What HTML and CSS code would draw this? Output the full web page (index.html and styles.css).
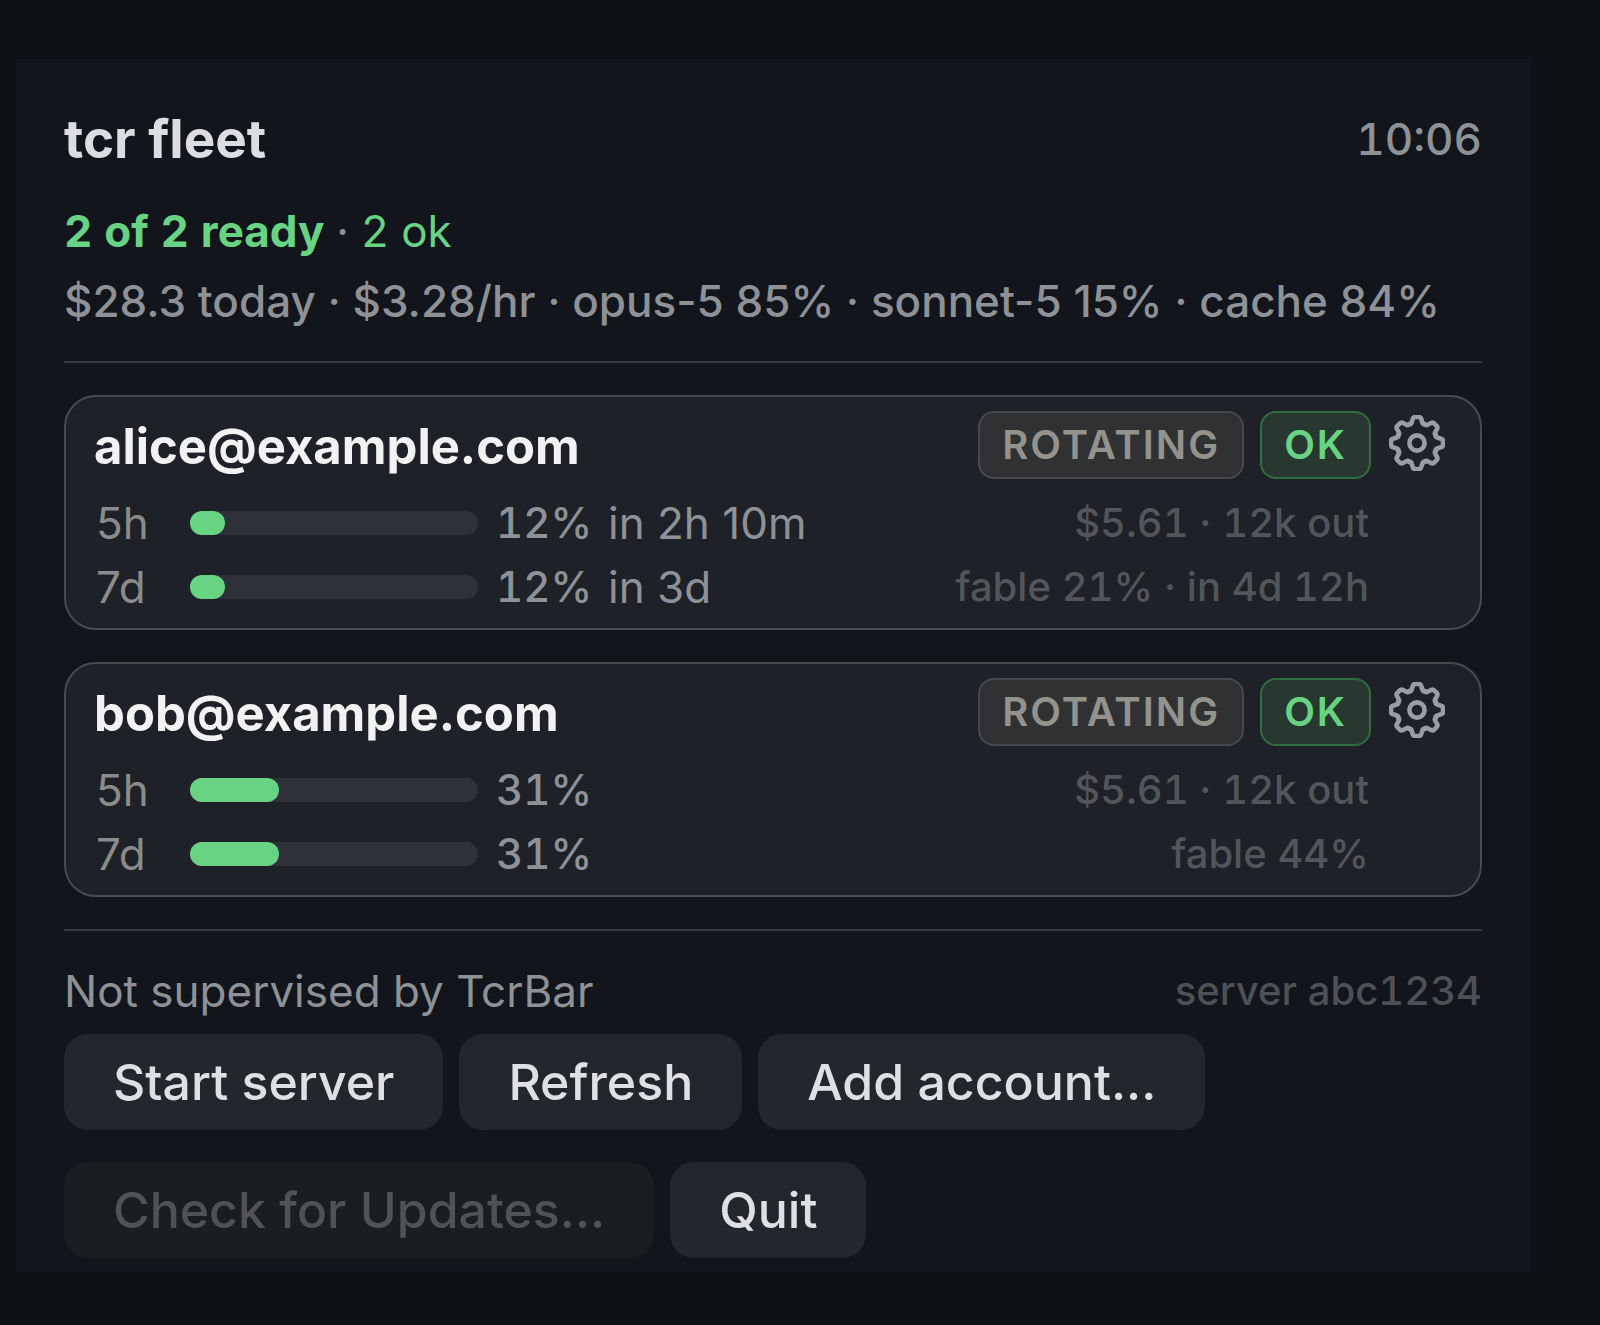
FILE: index.html
```html
<!DOCTYPE html>
<html lang="en">
<head>
<meta charset="utf-8">
<meta name="viewport" content="width=device-width, initial-scale=1">
<title>tcr fleet</title>
<link rel="stylesheet" href="styles.css">
</head>
<body>
<svg class="sprite" aria-hidden="true">
  <defs>
    <path id="tooth" d="M-7.8 -18.9C-6.4 -18.3 -5.6 -19.2 -5.2 -20.8L-4.3 -24C-3.9 -25.4 -3 -26 -1.8 -26H1.8C3 -26 3.9 -25.4 4.3 -24L5.2 -20.8C5.6 -19.2 6.4 -18.3 7.8 -18.9"/>
    <symbol id="gear" viewBox="-28 -28 56 56">
      <g fill="none" stroke="currentColor" stroke-width="4.6" stroke-linecap="round">
        <use href="#tooth"/>
        <use href="#tooth" transform="rotate(45)"/>
        <use href="#tooth" transform="rotate(90)"/>
        <use href="#tooth" transform="rotate(135)"/>
        <use href="#tooth" transform="rotate(180)"/>
        <use href="#tooth" transform="rotate(225)"/>
        <use href="#tooth" transform="rotate(270)"/>
        <use href="#tooth" transform="rotate(315)"/>
        <circle r="7.6"/>
      </g>
    </symbol>
  </defs>
</svg>
<main class="panel">
  <header class="header">
    <h1 class="title">tcr fleet</h1>
    <time class="clock">10:06</time>
  </header>
  <p class="summary"><strong class="ready">2 of 2 ready</strong> · <span class="ok-count">2 ok</span></p>
  <p class="spend">$28.3 today · $3.28/hr · opus-5 85% · sonnet-5 15% · cache 84%</p>

  <section class="accounts">
    <article class="card">
      <div class="card-head">
        <h2 class="account">alice@example.com</h2>
        <span class="badge">ROTATING</span>
        <span class="badge badge-ok">OK</span>
        <button class="gear" type="button" aria-label="Settings for alice@example.com"><svg><use href="#gear"/></svg></button>
      </div>
      <div class="usage">
        <span class="window">5h</span>
        <div class="bar"><div class="fill" style="width:12%"></div></div>
        <span class="percent">12%</span>
        <span class="reset">in 2h 10m</span>
        <span class="detail">$5.61 · 12k out</span>
      </div>
      <div class="usage">
        <span class="window">7d</span>
        <div class="bar"><div class="fill" style="width:12%"></div></div>
        <span class="percent">12%</span>
        <span class="reset">in 3d</span>
        <span class="detail">fable 21% · in 4d 12h</span>
      </div>
    </article>

    <article class="card">
      <div class="card-head">
        <h2 class="account">bob@example.com</h2>
        <span class="badge">ROTATING</span>
        <span class="badge badge-ok">OK</span>
        <button class="gear" type="button" aria-label="Settings for bob@example.com"><svg><use href="#gear"/></svg></button>
      </div>
      <div class="usage">
        <span class="window">5h</span>
        <div class="bar"><div class="fill" style="width:31%"></div></div>
        <span class="percent">31%</span>
        <span class="detail">$5.61 · 12k out</span>
      </div>
      <div class="usage">
        <span class="window">7d</span>
        <div class="bar"><div class="fill" style="width:31%"></div></div>
        <span class="percent">31%</span>
        <span class="detail">fable 44%</span>
      </div>
    </article>
  </section>

  <footer class="footer">
    <div class="status">
      <span>Not supervised by TcrBar</span>
      <span class="build">server abc1234</span>
    </div>
    <div class="actions">
      <button class="button" type="button">Start server</button>
      <button class="button" type="button">Refresh</button>
      <button class="button" type="button">Add account...</button>
    </div>
    <div class="actions">
      <button class="button" type="button" disabled>Check for Updates...</button>
      <button class="button" type="button">Quit</button>
    </div>
  </footer>
</main>
</body>
</html>
```
FILE: styles.css
```css
* {
  box-sizing: border-box;
}

body {
  margin: 0;
  padding: 59px 70px 52px 16px;
  background: #0d1216;
  color: #8e9195;
  font-family: Inter, "Liberation Sans", sans-serif;
  font-size: 44px;
  line-height: 56px;
}

h1, h2, p {
  margin: 0;
}

.sprite {
  position: absolute;
  width: 0;
  height: 0;
}

.clock,
.summary,
.percent,
.detail,
.build {
  font-variant-numeric: tabular-nums;
}

.panel {
  padding: 48px 48px 14px;
  background: #12151c;
}

.header {
  display: flex;
  align-items: center;
  justify-content: space-between;
  margin-bottom: 32px;
  line-height: 64px;
}

.title {
  color: #dcdde0;
  font-size: 53px;
  font-weight: 700;
}

.clock {
  font-weight: 500;
}

.summary {
  margin-bottom: 14px;
}

.ready {
  color: #67d383;
  font-weight: 700;
}

.ok-count {
  color: #67d383;
}

.spend {
  font-weight: 500;
}

.accounts {
  display: flex;
  flex-direction: column;
  gap: 32px;
  margin: 32px 0;
  padding: 32px 0;
  border-top: 2px solid #35383d;
  border-bottom: 2px solid #35383d;
}

.card {
  padding: 14px 33px 9px 28px;
  border: 2px solid #484a4e;
  border-radius: 32px;
  background: #1e2127;
}

.card-head {
  display: flex;
  align-items: flex-end;
  gap: 16px;
  margin-bottom: 12px;
}

.account {
  flex: 1;
  color: #f2f2f2;
  font-size: 49px;
  font-weight: 700;
  line-height: 64px;
}

.badge {
  padding: 0 22px;
  border: 2px solid #48494b;
  border-radius: 16px;
  background: #303133;
  color: #93928d;
  font-size: 40px;
  font-weight: 600;
  line-height: 64px;
  letter-spacing: 2px;
}

.badge-ok {
  border-color: #2f6d43;
  background: #283831;
  color: #67d383;
}

.gear {
  align-self: flex-start;
  width: 60px;
  height: 64px;
  padding: 4px 2px;
  border: 0;
  background: none;
  color: #9a9da1;
}

.gear svg {
  display: block;
  width: 56px;
  height: 56px;
}

.usage {
  display: flex;
  align-items: center;
  padding-right: 78px;
  line-height: 64px;
}

.window {
  width: 96px;
  padding-left: 2px;
  color: #8b8b8a;
}

.bar {
  width: 288px;
  height: 24px;
  margin-right: 18px;
  border-radius: 12px;
  background: #2f3138;
}

.fill {
  height: 100%;
  border-radius: 12px;
  background: #67d383;
}

.percent {
  width: 112px;
  font-size: 42px;
  font-weight: 500;
}

.detail {
  margin-left: auto;
  color: #52555a;
  font-size: 40px;
  font-weight: 500;
}

.status {
  display: flex;
  justify-content: space-between;
  margin-bottom: 15px;
}

.build {
  color: #4d5054;
  font-size: 40px;
  font-weight: 500;
}

.actions {
  display: flex;
  gap: 16px;
}

.actions + .actions {
  margin-top: 32px;
}

.button {
  padding: 0 49px;
  border: 0;
  border-radius: 24px;
  background: #23262d;
  color: #dfe0e2;
  font-family: inherit;
  font-size: 50px;
  font-weight: 500;
  line-height: 96px;
}

.button:disabled {
  background: #1b1e21;
  color: #505255;
}
```
